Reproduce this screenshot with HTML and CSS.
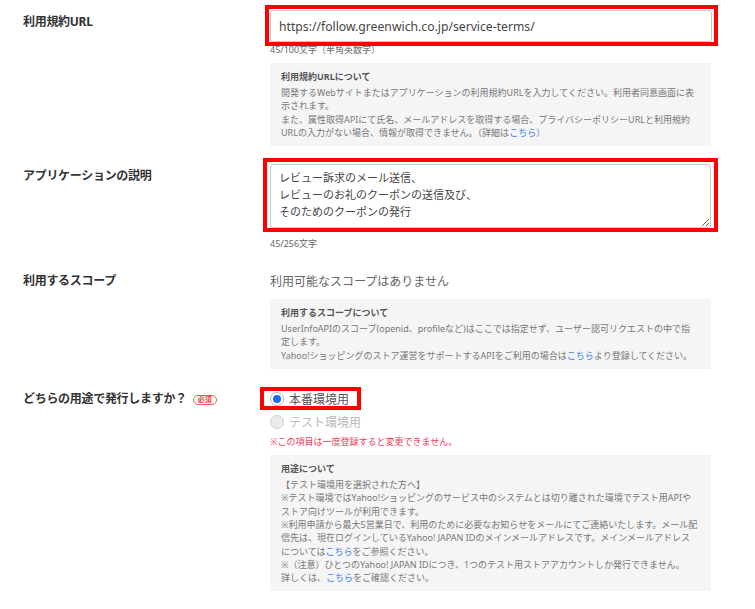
FILE: index.html
```html
<!DOCTYPE html>
<html lang="ja">

<head>
  <meta charset="UTF-8">
  <meta name="viewport" content="width=device-width, initial-scale=1.0">
  <title>アプリケーション登録</title>
  <link rel="stylesheet" href="styles.css">
</head>

<body>
  <div class="form-grid">
    <!-- 利用規約URL -->
    <div class="form-label">利用規約URL</div>
    <div class="form-field">
      <div class="mark mark-input">
        <input class="text-input" type="text" value="https://follow.greenwich.co.jp/service-terms/">
      </div>
      <div class="counter">45/100文字（半角英数字）</div>
      <div class="note-box">
        <div class="note-title">利用規約URLについて</div>
        <p>開発するWebサイトまたはアプリケーションの利用規約URLを入力してください。利用者同意画面に表示されます。<br>
          また、属性取得APIにて氏名、メールアドレスを取得する場合、プライバシーポリシーURLと利用規約URLの入力がない場合、情報が取得できません。（詳細は<a href="#">こちら</a>）</p>
      </div>
    </div>

    <!-- 説明 -->
    <div class="form-label">アプリケーションの説明</div>
    <div class="form-field">
      <div class="mark mark-area">
        <textarea class="text-area" rows="3">レビュー訴求のメール送信、
レビューのお礼のクーポンの送信及び、
そのためのクーポンの発行</textarea>
      </div>
      <div class="counter counter-area">45/256文字</div>
    </div>

    <!-- スコープ -->
    <div class="form-label">利用するスコープ</div>
    <div class="form-field">
      <div class="plain-value">利用可能なスコープはありません</div>
      <div class="note-box note-scope">
        <div class="note-title">利用するスコープについて</div>
        <p>UserInfoAPIのスコープ(openid、profileなど)はここでは指定せず、ユーザー認可リクエストの中で指定します。<br>
          Yahoo!ショッピングのストア運営をサポートするAPIをご利用の場合は<a href="#">こちら</a>より登録してください。</p>
      </div>
    </div>

    <!-- 用途 -->
    <div class="form-label">どちらの用途で発行しますか？<span class="badge">必須</span></div>
    <div class="form-field field-radio">
      <label class="radio marked-radio"><input type="radio" name="env" checked>本番環境用</label>
      <label class="radio radio-disabled"><input type="radio" name="env" disabled>テスト環境用</label>
      <div class="warn">※この項目は一度登録すると変更できません。</div>
      <div class="note-box note-usage">
        <div class="note-title">用途について</div>
        <p>【テスト環境用を選択された方へ】<br>
          ※テスト環境ではYahoo!ショッピングのサービス中のシステムとは切り離された環境でテスト用APIやストア向けツールが利用できます。<br>
          ※利用申請から最大5営業日で、利用のために必要なお知らせをメールにてご連絡いたします。メール配信先は、現在ログインしているYahoo! JAPAN IDのメインメールアドレスです。メインメールアドレスについては<a href="#">こちら</a>をご参照ください。<br>
          ※（注意）ひとつのYahoo! JAPAN IDにつき、1つのテスト用ストアアカウントしか発行できません。<br>
          詳しくは、<a href="#">こちら</a>をご確認ください。</p>
      </div>
    </div>
  </div>
</body>

</html>
```

FILE: styles.css
```css
body {
  margin: 0;
  background: #fff;
  color: #333;
  font-family: "Noto Sans", "Noto Sans CJK JP", sans-serif;
}

.form-grid {
  display: grid;
  grid-template-columns: 247px 441px;
  row-gap: 18px;
  padding: 10px 0 0 23px;
}

.form-label {
  padding-top: 4px;
  font-size: 12px;
  line-height: 16px;
  font-weight: bold;
  color: #333;
  letter-spacing: -0.3px;
}

.form-field {
  display: flex;
  flex-direction: column;
}

/* red annotation boxes */
.mark {
  border: 4px solid #f00;
}

.mark-input {
  padding: 1px 2px 0 1px;
  margin: -5px -7px -5px -5px;
}

.mark-area {
  padding: 2px 3px 0 3px;
  margin: -6px -7px -4px -7px;
}

.text-input {
  display: block;
  box-sizing: border-box;
  height: 32px;
  width: 100%;
  border: 1px solid #c8c8c8;
  border-radius: 3px;
  padding: 0 8px;
  margin: 0;
  font-family: inherit;
  font-size: 12.2px;
  color: #444;
  background: #fff;
}

.text-area {
  display: block;
  box-sizing: border-box;
  height: 64px;
  width: 100%;
  border: 1px solid #c8c8c8;
  border-radius: 3px;
  padding: 4px 8px;
  margin: 0;
  font-family: inherit;
  font-size: 11px;
  line-height: 17px;
  color: #444;
  resize: vertical;
}

.counter {
  margin-top: 2px;
  font-size: 9px;
  line-height: 14px;
  color: #666;
}

.counter-area {
  margin-top: 9px;
}

.note-box {
  margin-top: 6px;
  background: #f5f5f5;
  padding: 7px 12.5px 7px 11px;
  color: #777;
  font-size: 9px;
}

.note-box p {
  margin: 0;
  line-height: 13.3px;
}

.note-title {
  font-weight: bold;
  color: #555;
  line-height: 13px;
  margin-bottom: 3px;
}

.note-box a {
  color: #3b7ee8;
  text-decoration: none;
}

.plain-value {
  font-size: 12px;
  line-height: 26px;
  color: #666;
}

.note-scope {
  margin-top: 4px;
}

.badge {
  display: inline-block;
  vertical-align: 1px;
  margin-left: 6px;
  width: 22px;
  height: 8px;
  border: 1px solid #f55;
  border-radius: 6px;
  font-size: 7px;
  line-height: 8px;
  text-align: center;
  color: #f33;
  font-weight: bold;
  letter-spacing: 0;
}

.field-radio {
  padding-top: 4px;
}

.radio {
  display: flex;
  align-items: center;
  gap: 5px;
  height: 15px;
  font-size: 12px;
  color: #555;
  align-self: flex-start;
}

.radio + .radio {
  margin-top: 8px;
}

.marked-radio {
  outline: 4px solid #f00;
  margin-left: -6px;
  padding: 0 8px 0 6px;
}

.radio input {
  appearance: none;
  margin: 0;
  width: 14px;
  height: 14px;
  border-radius: 50%;
  border: 1px solid #b5b5b5;
  background: #fff;
  box-sizing: border-box;
  display: grid;
  place-content: center;
}

.radio input:checked::before {
  content: "";
  width: 8px;
  height: 8px;
  border-radius: 50%;
  background: #1a6ff0;
}

.radio-disabled {
  color: #bbb;
}

.radio-disabled input {
  background: #ececec;
  border-color: #cfcfcf;
}

.warn {
  margin-top: 6px;
  font-size: 9px;
  line-height: 13px;
  color: #f2385a;
}

.note-usage {
  margin-top: 7px;
}
```
